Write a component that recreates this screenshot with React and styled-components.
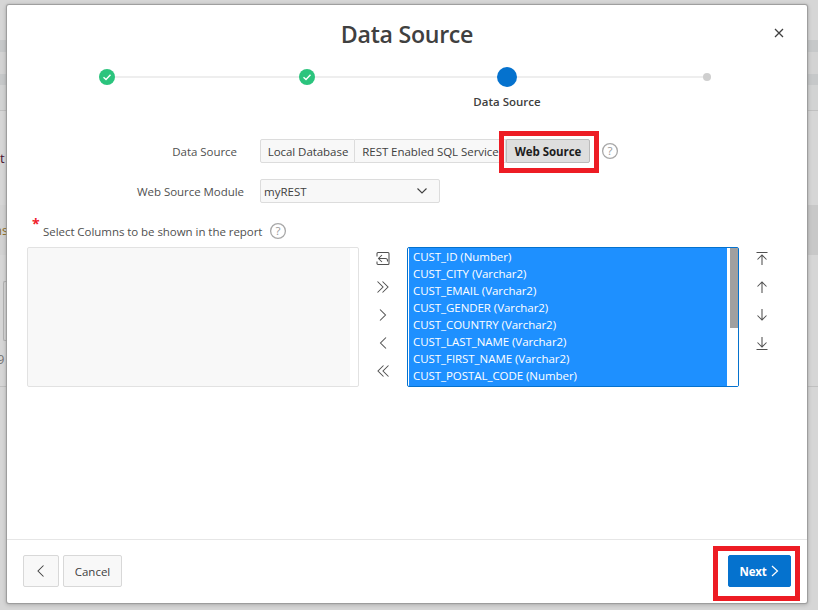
import React from "react";
import styled, { createGlobalStyle } from "styled-components";

const Global = createGlobalStyle`
  html, body { margin: 0; padding: 0; }
  body { font-family: "Open Sans", "Liberation Sans", sans-serif; width: 818px; height: 610px; overflow: hidden; background: #d6d6d6; }
  * { box-sizing: border-box; }
`;
const Page = styled.div`position: relative; width: 818px; height: 610px; background: #d6d6d6; overflow: hidden;`;
const Backdrop = styled.div`display: flex; flex-direction: column; height: 100%; color: #444; font-size: 13px;`;
const Band = styled.div`
  height: ${p => p.$h}px; flex: none; background: ${p => p.$bg || "transparent"};
  border-bottom: ${p => (p.$line ? "1px solid #c0c0c0" : "none")};
  color: ${p => p.$color || "inherit"}; line-height: ${p => p.$h}px; font-size: 13px; white-space: nowrap;
  text-indent: ${p => p.$indent || 0}px;
`;
const GhostBox = styled.div`width: 7px; height: 60px; margin: 0 0 0 3px; border: 1px solid #b2b2b2; border-right: 0; border-radius: 2px 0 0 2px;`;
const GhostText = styled.div`line-height: 36px; color: #777; text-indent: -3px;`;
const Dialog = styled.div`
  position: absolute; left: 7px; top: 5px; width: 800px; height: 598px; background: #fff; border-radius: 2px;
  box-shadow: 0 0 1px 1px #9b9b9b, 0 1px 4px 1px rgba(0,0,0,.18); display: flex; flex-direction: column; color: #404040;
`;
const Header = styled.header`position: relative; height: 59px; display: flex; justify-content: center; align-items: center;`;
const Title = styled.h1`margin: 0; font-size: 23.2px; font-weight: 600; color: #404040; letter-spacing: -0.3px; line-height: 57px;`;
const Close = styled.button`position: absolute; right: 21px; top: 21px; width: 14px; height: 14px; padding: 0; border: 0; background: none; color: #404040; display: flex;`;
const Stepper = styled.div`position: relative; display: grid; grid-template-columns: repeat(4, 200px); height: 57px;`;
const Track = styled.div`position: absolute; left: 100px; right: 100px; top: 12px; height: 2px; background: #eee;`;
const Step = styled.div`position: relative; display: flex; flex-direction: column; align-items: center;`;
const DotSlot = styled.div`height: 26px; display: flex; align-items: center; justify-content: center;`;
const Done = styled.span`width: 16px; height: 16px; border-radius: 50%; background: #2bc47d; display: flex; align-items: center; justify-content: center;`;
const Current = styled.span`width: 20px; height: 20px; border-radius: 50%; background: #0572ce;`;
const Future = styled.span`width: 8px; height: 8px; border-radius: 50%; background: #cfcfcf;`;
const StepLabel = styled.div`margin-top: 4px; font-size: 11.5px; font-weight: 600; line-height: 16px; color: #404040; letter-spacing: 0;`;
const Body = styled.div`flex: 1; padding: 18px 20px 0;`;
const Row = styled.div`display: flex; align-items: center; height: 24px; margin-bottom: ${p => p.$mb || 0}px;`;
const FieldLabel = styled.label`width: ${p => p.$w}px; margin-right: ${p => p.$mr}px; text-align: right; font-size: 11.5px; color: #505050; letter-spacing: -0.04px; white-space: nowrap;`;
const Segments = styled.div`display: flex; height: 24px;`;
const Segment = styled.button`
  height: 24px; width: ${p => p.$w}px; padding: 0 0 0 ${p => (p.$on ? 0 : 1)}px; font-family: inherit; font-size: 11.5px; letter-spacing: ${p => (p.$on ? "-0.04px" : "-0.05px")}; white-space: nowrap;
  border: 1px solid ${p => (p.$on ? "#bbb" : "#dcdcdc")}; border-left-width: ${p => (p.$first || p.$on ? 1 : 0)}px;
  border-radius: ${p => (p.$first ? "2px 0 0 2px" : p.$on ? "0 2px 2px 0" : "0")};
  background: ${p => (p.$on ? "#dedede" : "#f8f8f8")}; color: ${p => (p.$on ? "#1c1c1c" : "#404040")}; font-weight: ${p => (p.$on ? 700 : 400)};
`;
const HelpIcon = styled.svg`width: 18px; height: 18px; margin-left: ${p => p.$ml}px; flex: none;`;
const Select = styled.div`
  width: 180px; height: 24px; padding: 0 11px 0 3px; background: #f8f8f8; border: 1px solid #dcdcdc; border-radius: 2px;
  display: flex; align-items: center; justify-content: space-between; font-size: 11.5px; color: #404040;
`;
const ColumnsLabel = styled.div`position: relative; height: 22px; margin-top: 17px; padding-left: 16px; display: flex; align-items: center; font-size: 11.5px; color: #505050; letter-spacing: -0.05px;`;
const Star = styled.span`position: absolute; left: 5px; top: -4px; color: #f0202a; font-size: 14px; line-height: 16px; font-weight: 700;`;
const Shuttle = styled.div`display: flex; margin-top: 5px; height: 140px;`;
const LeftList = styled.div`width: 332px; height: 140px; border: 1px solid #e2e2e2; border-radius: 2px; background: linear-gradient(90deg, #f8f8f8 322px, #fff 322px);`;
const ToolColumn = styled.div`width: ${p => p.$w}px; display: flex; flex-direction: column; align-items: center; padding-top: 4px; gap: 12px; flex: none;`;
const ToolBtn = styled.span`display: flex; width: 16px; height: 16px; color: #505050;`;
const RightList = styled.div`width: 332px; height: 140px; border: 1px solid #0572ce; border-radius: 2px; background: #fff; display: flex; padding: 0 0 0 1px;`;
const Options = styled.ul`margin: 0; padding: 0; list-style: none; width: 318px; height: 138px; background: #1e90ff; flex: none;`;
const Option = styled.li`height: 17px; padding-left: 4px; line-height: 17px; font-size: 11.5px; color: #fff; letter-spacing: -0.06px; white-space: nowrap;`;
const Scroll = styled.div`margin-left: 3px; width: 9px; height: 138px; background: #fff;`;
const Thumb = styled.div`height: 80px; background: #a0a0a0;`;
const Footer = styled.footer`height: 64px; border-top: 1px solid #e6e6e6; padding: 15px 16px 0; display: flex; justify-content: space-between; align-items: flex-start;`;
const FooterLeft = styled.div`display: flex; gap: 4px;`;
const Btn = styled.button`
  height: 32px; width: ${p => p.$w}px; padding: 0; font-family: inherit; font-size: 11.5px; color: #404040; background: #f8f8f8;
  border: 1px solid #d8d8d8; border-radius: 2px; display: flex; align-items: center; justify-content: center;
`;
const Primary = styled(Btn)`background: #0572ce; border-color: #0572ce; color: #fff; font-weight: 700; gap: 5px; font-size: 11.5px; letter-spacing: -0.2px;`;
const Callout = styled.div`position: absolute; left: ${p => p.$x}px; top: ${p => p.$y}px; width: ${p => p.$w}px; height: ${p => p.$h}px; border: 5px solid #ed1c24; pointer-events: none;`;

const Ic = ({ d, sw = 1.05 }) => (
  <svg width="16" height="16" viewBox="0 0 16 16" fill="none" stroke="currentColor" strokeWidth={sw}><path d={d} /></svg>
);
const Help = ({ ml }) => (
  <HelpIcon $ml={ml} viewBox="0 0 18 18" fill="none">
    <circle cx="9" cy="9" r="7.4" stroke="#a8a8a8" strokeWidth="1.3" />
    <text x="9" y="13" textAnchor="middle" fontSize="11.5" fontFamily="Open Sans" fill="#999">?</text>
  </HelpIcon>
);
const Check = () => (
  <svg width="10" height="10" viewBox="0 0 10 10" fill="none" stroke="#fff" strokeWidth="1.4"><path d="M1.5 5.3 4 7.5 8.5 2.8" /></svg>
);

const columns = ["CUST_ID (Number)", "CUST_CITY (Varchar2)", "CUST_EMAIL (Varchar2)", "CUST_GENDER (Varchar2)", "CUST_COUNTRY (Varchar2)", "CUST_LAST_NAME (Varchar2)", "CUST_FIRST_NAME (Varchar2)", "CUST_POSTAL_CODE (Number)"];
const shuttle = [
  "M2 5.5V2.5a1 1 0 0 1 1-1h10a1 1 0 0 1 1 1v10a1 1 0 0 1-1 1H3a1 1 0 0 1-1-1v-2M7 4 3.5 7.5 7 11M3.5 7.5h7a2 2 0 0 1 2 2v1",
  "M2.5 2.5 8 8l-5.5 5.5M7.5 2.5 13 8l-5.5 5.5",
  "M5 2.5 10.5 8 5 13.5",
  "M11 2.5 5.5 8l5.5 5.5",
  "M8.5 2.5 3 8l5.5 5.5M13.5 2.5 8 8l5.5 5.5",
];
const reorder = [
  "M2.5 1.5h11M8 14V4.5M3.5 8.5 8 4l4.5 4.5",
  "M8 14V3M3.5 7.5 8 3l4.5 4.5",
  "M8 2v11M3.5 8.5 8 13l4.5-4.5",
  "M2.5 14.5h11M8 2v9.5M3.5 7.5 8 12l4.5-4.5",
];

export default function App() {
  return (
    <Page>
      <Global />
      <Backdrop>
        <Band $h={40} /><Band $h={12} $bg="#c6c8c9" /><Band $h={22} $bg="#d3d3d3" /><Band $h={11} $bg="#c6c8c9" /><Band $h={26} $bg="#d2d3d3" $line />
        <Band $h={41} /><Band $h={12} $color="#4a1030">t</Band><Band $h={41} />
        <Band $h={50} $bg="linear-gradient(90deg, #d2d2d2 400px, #c8c8c8 400px)" $color="#8a6a20" $indent={-6}>ns</Band>
        <Band $h={26} /><Band $h={106} $line><GhostBox /><GhostText>9</GhostText></Band>
        <Band $h={223} />
      </Backdrop>
      <Dialog>
        <Header>
          <Title>Data Source</Title>
          <Close aria-label="Close"><svg width="14" height="14" viewBox="0 0 14 14" fill="none" stroke="currentColor" strokeWidth="1.3"><path d="M3 3l8 8M11 3l-8 8" /></svg></Close>
        </Header>
        <Stepper>
          <Track />
          <Step><DotSlot><Done><Check /></Done></DotSlot></Step>
          <Step><DotSlot><Done><Check /></Done></DotSlot></Step>
          <Step><DotSlot><Current /></DotSlot><StepLabel>Data Source</StepLabel></Step>
          <Step><DotSlot><Future /></DotSlot></Step>
        </Stepper>
        <Body>
          <Row $mb={16}>
            <FieldLabel $w={210} $mr={23}>Data Source</FieldLabel>
            <Segments>
              <Segment $first $w={95}>Local Database</Segment>
              <Segment $w={151}>REST Enabled SQL Service</Segment>
              <Segment $on $w={84}>Web Source</Segment>
            </Segments>
            <Help ml={11} />
          </Row>
          <Row>
            <FieldLabel $w={217} $mr={16}>Web Source Module</FieldLabel>
            <Select>myREST<svg width="12" height="12" viewBox="0 0 12 12" fill="none" stroke="#404040" strokeWidth="1.1"><path d="M1.5 3.5 6 8l4.5-4.5" /></svg></Select>
          </Row>
          <ColumnsLabel><Star>*</Star>Select Columns to be shown in the report<Help ml={7} /></ColumnsLabel>
          <Shuttle>
            <LeftList />
            <ToolColumn $w={48}>{shuttle.map(d => <ToolBtn key={d}><Ic d={d} /></ToolBtn>)}</ToolColumn>
            <RightList>
              <Options>{columns.map(c => <Option key={c}>{c}</Option>)}</Options>
              <Scroll><Thumb /></Scroll>
            </RightList>
            <ToolColumn $w={46}>{reorder.map(d => <ToolBtn key={d}><Ic d={d} /></ToolBtn>)}</ToolColumn>
          </Shuttle>
        </Body>
        <Footer>
          <FooterLeft>
            <Btn $w={36} aria-label="Previous"><Ic d="M10.5 2.5 5 8l5.5 5.5" /></Btn>
            <Btn $w={59}>Cancel</Btn>
          </FooterLeft>
          <Primary $w={63}>Next<svg width="8" height="12" viewBox="0 0 8 12" fill="none" stroke="currentColor" strokeWidth="1.2"><path d="M1 1l5.5 5L1 11" /></svg></Primary>
        </Footer>
      </Dialog>
      <Callout $x={499} $y={131} $w={100} $h={42} />
      <Callout $x={713} $y={546} $w={87} $h={55} />
    </Page>
  );
}
